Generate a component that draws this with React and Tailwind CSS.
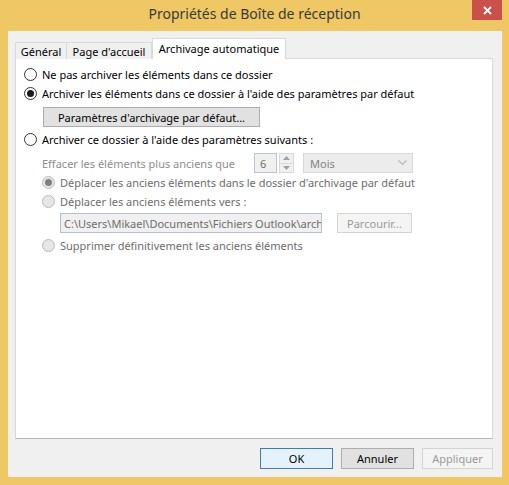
import React from 'react';

const font = { fontFamily: '"Noto Sans", "Open Sans", sans-serif' };

const Radio = ({ checked, disabled }) => (
    <span
        className={`flex h-[13px] w-[13px] shrink-0 items-center justify-center rounded-full border ${
            disabled ? 'border-[#bcbcbc] bg-[#e6e6e6]' : 'border-[#333333] bg-white'
        }`}
    >
        {checked && (
            <span className={`h-[7px] w-[7px] rounded-full ${disabled ? 'bg-[#7f7f7f]' : 'bg-[#1a1a1a]'}`}></span>
        )}
    </span>
);

const RadioRow = ({ label, checked, disabled, className = '' }) => (
    <div className={`flex h-[19px] items-center gap-[5px] ${className}`}>
        <Radio checked={checked} disabled={disabled} />
        <span className={disabled ? 'text-[#6d6d6d]' : 'text-[#000000]'}>{label}</span>
    </div>
);

const App = () => {
    return (
        <div className="flex h-[485px] w-[509px] flex-col bg-[#efc765] text-[11px] leading-none" style={font}>
            {/* Title bar */}
            <div className="grid h-[31px] grid-cols-[1fr_auto_1fr]">
                <div></div>
                <div className="pt-[7px] text-[14px] text-[#3a3a3a]">Propriétés de Boîte de réception</div>
                <div className="flex justify-end pr-[7px]">
                    <div className="flex h-[20px] w-[30px] items-center justify-center bg-[#c9504b]">
                        <svg width="9" height="9" viewBox="0 0 9 9">
                            <path d="M1 1 L8 8 M8 1 L1 8" stroke="white" strokeWidth="1.8" />
                        </svg>
                    </div>
                </div>
            </div>

            {/* Client area */}
            <div className="ml-[8px] mr-[7px] flex h-[446px] flex-col bg-[#f0f0f0] pl-[7px] pr-[9px] pt-[7px]">
                {/* Tabs */}
                <div className="relative z-10 -mb-px flex h-[21px] items-end">
                    <div className="flex h-[17px] w-[52px] items-center justify-center border border-b-0 border-[#d9d9d9] bg-[#f0f0f0] pt-px">
                        Général
                    </div>
                    <div className="flex h-[17px] w-[85px] items-center justify-center border border-b-0 border-l-0 border-[#d9d9d9] bg-[#f0f0f0] pt-px">
                        Page d'accueil
                    </div>
                    <div className="flex h-[21px] w-[134px] items-start justify-center border border-b-0 border-[#d9d9d9] bg-white pt-[4px]">
                        Archivage automatique
                    </div>
                </div>

                {/* Panel */}
                <div className="flex h-[381px] flex-col border border-[#d9d9d9] border-b-[#b4b4b4] bg-white pl-[8px] pt-[6px]">
                    <RadioRow label="Ne pas archiver les éléments dans ce dossier" />
                    <RadioRow label="Archiver les éléments dans ce dossier à l'aide des paramètres par défaut" checked />
                    <div className="ml-[19px] mt-[4px] flex h-[20px] w-[217px] items-center justify-center border border-[#adadad] bg-[#e1e1e1] text-black">
                        Paramètres d'archivage par défaut...
                    </div>
                    <RadioRow className="mt-[3px]" label="Archiver ce dossier à l'aide des paramètres suivants :" />

                    <div className="mt-[4px] flex h-[20px] items-center pl-[18px]">
                        <span className="w-[212px] text-[#8d8d8d]">Effacer les éléments plus anciens que</span>
                        <div className="flex h-[20px] w-[23px] items-center border border-[#b7c4d6] bg-[#f0f0f0] pl-[5px] text-[#6d6d6d]">
                            6
                        </div>
                        <div className="ml-[2px] flex h-[20px] w-[15px] flex-col border border-[#d9d9d9] bg-[#f0f0f0]">
                            <div className="flex flex-1 items-center justify-center border-b border-[#d9d9d9]">
                                <svg width="7" height="4" viewBox="0 0 7 4">
                                    <path d="M0 4 L3.5 0 L7 4 Z" fill="#a0a0a0" />
                                </svg>
                            </div>
                            <div className="flex flex-1 items-center justify-center">
                                <svg width="7" height="4" viewBox="0 0 7 4">
                                    <path d="M0 0 L3.5 4 L7 0 Z" fill="#a0a0a0" />
                                </svg>
                            </div>
                        </div>
                        <div className="ml-[9px] flex h-[20px] w-[110px] items-center justify-between border border-[#d9d9d9] bg-[#ececec] pl-[6px] pr-[5px] text-[#838383]">
                            <span>Mois</span>
                            <svg width="9" height="6" viewBox="0 0 9 6">
                                <path d="M0.5 0.5 L4.5 4.5 L8.5 0.5" fill="none" stroke="#b9b9b9" strokeWidth="1.2" />
                            </svg>
                        </div>
                    </div>

                    <div className="flex flex-col pl-[18px]">
                        <RadioRow label="Déplacer les anciens éléments dans le dossier d'archivage par défaut" checked disabled />
                        <RadioRow label="Déplacer les anciens éléments vers :" disabled />
                        <div className="mt-[2px] flex h-[20px] items-center">
                            <div className="ml-[18px] flex h-[20px] w-[262px] items-center overflow-hidden whitespace-nowrap border border-[#b2c1d4] bg-[#f0f0f0] pl-[3px] text-[#6d6d6d]">
                                C:\Users\Mikael\Documents\Fichiers Outlook\arch
                            </div>
                            <div className="ml-[15px] flex h-[20px] w-[75px] items-center justify-center border border-[#d4d4d4] bg-[#f4f4f4] text-[#9a9a9a]">
                                Parcourir...
                            </div>
                        </div>
                        <RadioRow className="mt-[3px]" label="Supprimer définitivement les anciens éléments" disabled />
                    </div>
                </div>

                {/* Dialog buttons */}
                <div className="mt-[9px] flex justify-end gap-[8px]">
                    <div className="flex h-[21px] w-[73px] items-center justify-center border border-[#3c7fb1] bg-[#e5f1fb] text-black">
                        OK
                    </div>
                    <div className="flex h-[21px] w-[73px] items-center justify-center border border-[#adadad] bg-[#e1e1e1] text-black">
                        Annuler
                    </div>
                    <div className="flex h-[21px] w-[71px] items-center justify-center border border-[#d4d4d4] bg-[#f4f4f4] text-[#9a9a9a]">
                        Appliquer
                    </div>
                </div>
            </div>
        </div>
    );
};

export default App;
